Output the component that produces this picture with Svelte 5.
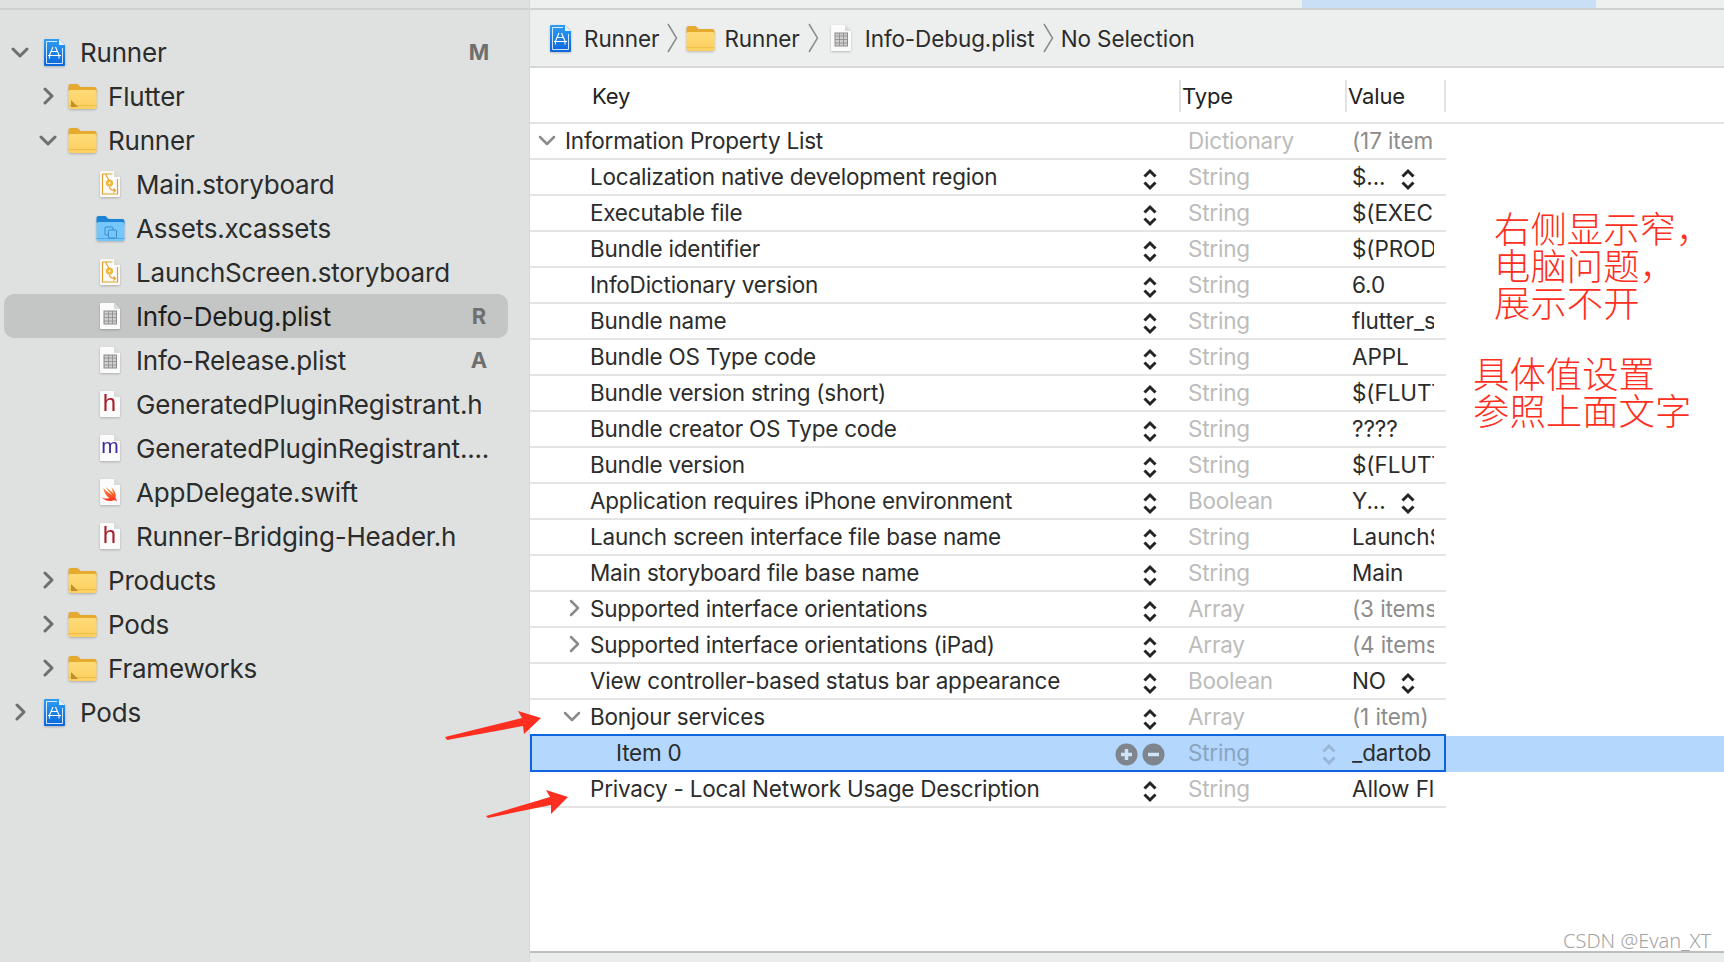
<script>
  const tree = [
    { level: 0, open: true, icon: 'project', name: 'Runner', badge: 'M' },
    { level: 1, open: false, icon: 'group', name: 'Flutter' },
    { level: 1, open: true, icon: 'folder', name: 'Runner' },
    { level: 2, icon: 'story', name: 'Main.storyboard' },
    { level: 2, icon: 'assets', name: 'Assets.xcassets' },
    { level: 2, icon: 'story', name: 'LaunchScreen.storyboard' },
    { level: 2, icon: 'plist', name: 'Info-Debug.plist', badge: 'R', selected: true },
    { level: 2, icon: 'plist', name: 'Info-Release.plist', badge: 'A' },
    { level: 2, icon: 'h', name: 'GeneratedPluginRegistrant.h' },
    { level: 2, icon: 'm', name: 'GeneratedPluginRegistrant....' },
    { level: 2, icon: 'swift', name: 'AppDelegate.swift' },
    { level: 2, icon: 'h', name: 'Runner-Bridging-Header.h' },
    { level: 1, open: false, icon: 'group', name: 'Products' },
    { level: 1, open: false, icon: 'folder', name: 'Pods' },
    { level: 1, open: false, icon: 'group', name: 'Frameworks' },
    { level: 0, open: false, icon: 'project', name: 'Pods' }
  ];

  const rows = [
    { level: 0, open: true, key: 'Information Property List', type: 'Dictionary', value: '(17 items', muted: true, noStep: true },
    { key: 'Localization native development region', type: 'String', value: '$...', valueStep: true },
    { key: 'Executable file', type: 'String', value: '$(EXEC' },
    { key: 'Bundle identifier', type: 'String', value: '$(PROD' },
    { key: 'InfoDictionary version', type: 'String', value: '6.0' },
    { key: 'Bundle name', type: 'String', value: 'flutter_s' },
    { key: 'Bundle OS Type code', type: 'String', value: 'APPL' },
    { key: 'Bundle version string (short)', type: 'String', value: '$(FLUTT' },
    { key: 'Bundle creator OS Type code', type: 'String', value: '????' },
    { key: 'Bundle version', type: 'String', value: '$(FLUTT' },
    { key: 'Application requires iPhone environment', type: 'Boolean', value: 'Y...', valueStep: true },
    { key: 'Launch screen interface file base name', type: 'String', value: 'LaunchS' },
    { key: 'Main storyboard file base name', type: 'String', value: 'Main' },
    { key: 'Supported interface orientations', open: false, type: 'Array', value: '(3 items', muted: true },
    { key: 'Supported interface orientations (iPad)', open: false, type: 'Array', value: '(4 items', muted: true },
    { key: 'View controller-based status bar appearance', type: 'Boolean', value: 'NO', valueStep: true },
    { key: 'Bonjour services', open: true, type: 'Array', value: '(1 item)', muted: true },
    { level: 2, key: 'Item 0', type: 'String', value: '_dartob', selected: true },
    { key: 'Privacy - Local Network Usage Description', type: 'String', value: 'Allow Fl' }
  ];
</script>

{#snippet chevron(open)}
  {#if open}
    <svg class="chev" width="18" height="11" viewBox="0 0 18 11"><path d="M2 2l7 7 7-7" /></svg>
  {:else}
    <svg class="chev closed" width="11" height="18" viewBox="0 0 11 18"><path d="M2 2l7 7-7 7" /></svg>
  {/if}
{/snippet}

{#snippet stepper(pale)}
  <svg class="stepper" class:pale width="16" height="23" viewBox="0 0 16 23"><path d="M2.5 8.5L8 3l5.5 5.5M2.5 14.5L8 20l5.5-5.5" /></svg>
{/snippet}

{#snippet project()}
  <svg class="glyph" width="23" height="29" viewBox="0 0 23 29">
    <linearGradient id="blue" x1="0" y1="0" x2="0" y2="1"><stop offset="0" stop-color="#2f9df0" /><stop offset="1" stop-color="#0a66dd" /></linearGradient>
    <path d="M1 2a1 1 0 0 1 1-1h14l6 6v20a1 1 0 0 1-1 1H2a1 1 0 0 1-1-1z" fill="url(#blue)" />
    <path d="M16 1l6 6h-6z" fill="#e4f0fb" />
    <path d="M14 3.5H3.5v22h16V10" fill="none" stroke="#fff" stroke-width=".8" />
    <path d="M10 9l-3.5 8M12.5 9l3.5 8M5 17.5h13M8 13.5h7M6.5 17.5v3M16 17.5v3" fill="none" stroke="#fff" stroke-width="1.1" />
  </svg>
{/snippet}

{#snippet folder(corner)}
  <svg class="glyph" width="29" height="27" viewBox="0 0 29 27">
    <linearGradient id="yellow" x1="0" y1="0" x2="0" y2="1"><stop offset="0" stop-color="#fedb78" /><stop offset="1" stop-color="#fccf5f" /></linearGradient>
    <path d="M.5 8V3a2 2 0 0 1 2-2h7l3 3h14a2 2 0 0 1 2 2v4z" fill="#e6ab2e" />
    <rect x=".5" y="7" width="28" height="19" rx="2" fill="url(#yellow)" />
    <rect x=".5" y="22" width="28" height="1" fill="#f0bd48" />
    {#if corner}<path d="M3 24v-7l7 7z" fill="#bd8f2d" />{/if}
  </svg>
{/snippet}

{#snippet assets()}
  <svg class="glyph" width="29" height="27" viewBox="0 0 29 27">
    <path d="M.5 8V3a2 2 0 0 1 2-2h7l3 3h14a2 2 0 0 1 2 2v4z" fill="#1b84d6" />
    <rect x=".5" y="7" width="28" height="19" rx="2" fill="#74c6fb" />
    <rect x=".5" y="23" width="28" height="1" fill="#4ea9ea" />
    <rect x="9" y="12" width="8" height="8" rx="1" fill="none" stroke="#3a8ccb" />
    <rect x="12.5" y="15" width="8" height="8" rx="1" fill="#74c6fb" stroke="#3a8ccb" />
  </svg>
{/snippet}

{#snippet page()}
  <path d="M1 2a1 1 0 0 1 1-1h13l6 6v19a1 1 0 0 1-1 1H2a1 1 0 0 1-1-1z" fill="#fbfbfb" />
  <path d="M15 1l6 6h-6z" fill="#d9dada" />
{/snippet}

{#snippet fileIcon(kind)}
  <svg class="glyph" width="22" height="28" viewBox="0 0 22 28">
    {@render page()}
    {#if kind === 'story'}
      <path d="M13.5 4H3.5v20h15V9" fill="none" stroke="#e0a02a" stroke-width="1.2" />
      <circle cx="10.5" cy="13" r="3.6" fill="#f2b63c" />
      <circle cx="10.5" cy="13" r="1.2" fill="#fbe7b5" />
      <path d="M7 4c0 3 2 4 3 6M10.5 16.500c0 3 2 4 6 4M14.500 18.500l2 2-2 2" fill="none" stroke="#e0a02a" stroke-width="1.1" />
    {:else if kind === 'plist'}
      <rect x="5" y="9" width="12.500" height="13" fill="#cfcfcf" stroke="#8c8c8c" />
      <path d="M5 12h12.500M5 15.500h12.500M5 19h12.500M9.500 9v13M13.500 9v13" stroke="#8c8c8c" stroke-width=".8" />
    {:else if kind === 'h'}
      <text class="ftext" x="10.500" y="21" fill="#a71d2a">h</text>
    {:else if kind === 'm'}
      <text class="ftext small" x="11" y="19" fill="#3c2a9c">m</text>
    {:else if kind === 'swift'}
      <linearGradient id="swift" x1="0" y1="0" x2="0" y2="1"><stop offset="0" stop-color="#fa9a3a" /><stop offset="1" stop-color="#fb2a1e" /></linearGradient>
      <path d="M4 10c3 3 6 5 9 7-2.500-2.500-4.500-5-6-8 2.500 2.500 5 4.500 8 6.500-1-1.700-2-3.500-2.500-6 3.500 3 5 7 4 10.500 1 1.200 1.400 2.300 1.300 3.500-1-1.300-2.600-1.500-4-1-3.500 1.300-8 .5-11.500-3.500 3 1.700 5.500 2 8 1-3-2-5-5.500-6.300-10.500z" fill="url(#swift)" />
    {/if}
  </svg>
{/snippet}

{#snippet crumbSep()}
  <svg class="sep" width="11" height="30" viewBox="0 0 11 30"><path d="M1 1l8.500 14L1 29" /></svg>
{/snippet}

<div class="app">
  <aside class="sidebar">
    <div class="strip"></div>
    <ul class="tree">
      {#each tree as item}
        <li class="node" class:selected={item.selected} style="padding-left: {4 + item.level * 28}px">
          <span class="chev-slot">
            {#if item.open !== undefined}{@render chevron(item.open)}{/if}
          </span>
          <span class="icon-slot">
            {#if item.icon === 'project'}{@render project()}
            {:else if item.icon === 'group'}{@render folder(true)}
            {:else if item.icon === 'folder'}{@render folder(false)}
            {:else if item.icon === 'assets'}{@render assets()}
            {:else}{@render fileIcon(item.icon)}{/if}
          </span>
          <span class="name">{item.name}</span>
          {#if item.badge}<span class="badge">{item.badge}</span>{/if}
        </li>
      {/each}
    </ul>
  </aside>

  <main class="editor">
    <div class="strip light"><div class="tab-hint"></div></div>
    <nav class="crumbs">
      {@render project()}
      <span class="after-project">Runner</span>
      {@render crumbSep()}
      {@render folder(false)}
      <span>Runner</span>
      {@render crumbSep()}
      <span class="file-crumb">{@render fileIcon('plist')}</span>
      <span class="after-file">Info-Debug.plist</span>
      {@render crumbSep()}
      <span class="tight">No Selection</span>
    </nav>

    <div class="head">
      <div class="cols">
        <div class="hcell first">Key</div>
        <div class="hcell">Type</div>
        <div class="hcell last">Value</div>
      </div>
    </div>

    <div class="table">
      {#each rows as row}
        <div class="row" class:selected={row.selected}>
          <div class="cols">
            <div class="key" class:top={row.level === 0} class:deep={row.level === 2}>
              <span class="disc">
                {#if row.open !== undefined}{@render chevron(row.open)}{/if}
              </span>
              <span class="key-text">{row.key}</span>
              {#if row.selected}
                <svg class="round" width="23" height="23" viewBox="0 0 23 23"><circle cx="11.500" cy="11.500" r="11" /><path d="M11.500 6v11M6 11.500h11" /></svg>
                <svg class="round" width="23" height="23" viewBox="0 0 23 23"><circle cx="11.500" cy="11.500" r="11" /><path d="M6 11.500h11" /></svg>
              {:else if !row.noStep}
                {@render stepper(false)}
              {/if}
            </div>
            <div class="type">
              <span>{row.type}</span>
              {#if row.selected}{@render stepper(true)}{/if}
            </div>
            <div class="val" class:muted={row.muted}>
              <span class="val-text">{row.value}</span>
              {#if row.valueStep}{@render stepper(false)}{/if}
            </div>
          </div>
        </div>
      {/each}
    </div>
    <div class="footer"></div>
  </main>

  <svg class="arrows" width="1724" height="962" viewBox="0 0 1724 962">
    <path d="M445 737L522 718 518 711 541 718 524 734 523 726 447 740z" />
    <path d="M486 816L550 797 546 790 568 797 551 814 551 805 488 818z" />
  </svg>

  <div class="note one">右侧显示窄，<br />电脑问题，<br />展示不开</div>
  <div class="note two">具体值设置<br />参照上面文字</div>
  <div class="watermark">CSDN @Evan_XT</div>
</div>

<style>
  :global(body) {
    margin: 0;
  }

  .app {
    position: relative;
    display: flex;
    width: 1724px;
    height: 962px;
    overflow: hidden;
    font-family: Inter, "Noto Sans", sans-serif;
    color: #2b2c2c;
  }

  .sidebar {
    width: 530px;
    flex: none;
    box-sizing: border-box;
    background: #dfe1e0;
    border-right: 1px solid #d6d8d7;
  }

  .strip {
    height: 8px;
    border-bottom: 2px solid #cfd1d0;
  }

  .strip.light {
    background: #eef0ef;
    padding-left: 772px;
  }

  .tab-hint {
    width: 294px;
    height: 8px;
    background: #c8dff5;
  }

  .tree {
    list-style: none;
    margin: 20px 21px 0 4px;
    padding: 0;
  }

  .node {
    display: flex;
    align-items: center;
    height: 44px;
    padding-right: 14px;
    border-radius: 10px;
    font-size: 26px;
    letter-spacing: -0.2px;
    white-space: nowrap;
  }

  .node.selected {
    background: #c4c6c5;
    color: #1d1d1d;
  }

  .chev-slot {
    width: 24px;
    flex: none;
    display: flex;
    justify-content: center;
    align-items: center;
  }

  .chev {
    flex: none;
    fill: none;
    stroke: #6d6f6f;
    stroke-width: 3;
    stroke-linecap: round;
    stroke-linejoin: round;
  }

  .icon-slot {
    width: 44px;
    flex: none;
    display: flex;
    justify-content: center;
    align-items: center;
  }

  .glyph {
    flex: none;
    filter: drop-shadow(0 1px 1px rgba(0, 0, 0, 0.22));
  }

  .name {
    margin-left: 4px;
  }

  .badge {
    margin-left: auto;
    width: 30px;
    text-align: center;
    font-size: 22px;
    font-weight: 700;
    color: #6e7070;
    letter-spacing: 0;
  }

  .ftext {
    font-family: "Liberation Sans", sans-serif;
    font-size: 24px;
    text-anchor: middle;
    letter-spacing: 0;
  }

  .ftext.small {
    font-size: 21px;
  }

  .editor {
    flex: 1;
    display: flex;
    flex-direction: column;
    min-width: 0;
    background: #fff;
  }

  .crumbs {
    display: flex;
    align-items: center;
    gap: 9px;
    height: 56px;
    padding-left: 19px;
    background: #edefee;
    border-bottom: 2px solid #d6d8d7;
    font-size: 22.500px;
    letter-spacing: -0.1px;
  }

  .after-project {
    margin-left: 3px;
  }

  .after-file {
    margin-left: 4px;
  }

  .file-crumb {
    display: flex;
    margin-left: 3px;
  }

  .tight {
    margin-left: -1px;
  }

  .sep {
    margin: 0 -1px;
    fill: none;
    stroke: #8b8c8c;
    stroke-width: 1.500;
  }

  .head {
    height: 54px;
    border-bottom: 2px solid #e3e3e3;
  }

  .cols {
    display: grid;
    grid-template-columns: 649px 166px 101px;
    width: 916px;
    height: 100%;
    box-sizing: border-box;
  }

  .hcell {
    display: flex;
    align-items: center;
    align-self: center;
    box-sizing: border-box;
    height: 32px;
    margin-top: 2px;
    padding: 0 0 1px 1px;
    border-left: 2px solid #e3e3e3;
    font-size: 22px;
    letter-spacing: -0.1px;
    color: #222;
  }

  .hcell.first {
    padding-left: 62px;
    border-left: none;
  }

  .hcell.last {
    border-right: 2px solid #e3e3e3;
  }

  .table {
    flex: 1;
  }

  .row {
    height: 36px;
    font-size: 22.500px;
    letter-spacing: -0.22px;
    white-space: nowrap;
  }

  .row .cols {
    position: relative;
    padding-bottom: 2px;
    border-bottom: 2px solid #e4e4e4;
  }

  .row.selected {
    background: #b3d7fd;
  }

  .row.selected .cols {
    padding-bottom: 4px;
    border-bottom: none;
  }

  .row.selected .cols::after {
    content: "";
    position: absolute;
    inset: -2px 0 0 0;
    border: 2px solid #0f65de;
    pointer-events: none;
  }

  .key {
    display: flex;
    align-items: center;
    padding: 0 21px 0 36px;
    min-width: 0;
  }

  .key.top {
    padding-left: 11px;
  }

  .key.deep {
    padding-left: 62px;
    padding-right: 14px;
  }

  .disc {
    width: 24px;
    flex: none;
    box-sizing: border-box;
    padding-right: 12px;
    display: flex;
    justify-content: center;
    align-items: center;
  }

  .disc .chev {
    stroke: #8a8a8a;
    stroke-width: 2.500;
  }

  .disc .closed {
    margin-left: 4px;
  }

  .key-text {
    flex: 1;
  }

  .stepper {
    flex: none;
    margin-top: 7px;
    fill: none;
    stroke: #242424;
    stroke-width: 3;
  }

  .stepper.pale {
    margin-top: 4px;
    stroke: #9ab6d6;
  }

  .round {
    flex: none;
    margin: 4px 0 0 4px;
  }

  .round circle {
    fill: #7f858c;
  }

  .round path {
    stroke: #cfe3f9;
    stroke-width: 3.500;
  }

  .type {
    display: flex;
    align-items: center;
    justify-content: space-between;
    padding: 0 8px 0 9px;
    color: #bcbcbc;
  }

  .selected .type {
    color: #8ba4c0;
  }

  .val {
    display: flex;
    align-items: center;
    padding: 0 12px 0 7px;
    min-width: 0;
    letter-spacing: -0.1px;
  }

  .val.muted {
    color: #8c8c8c;
  }

  .val-text {
    flex: 1;
    min-width: 0;
    overflow: hidden;
  }

  .val .stepper {
    margin-right: 18px;
  }

  .footer {
    height: 9px;
    background: #ebedec;
    border-top: 2px solid #bdbfbe;
  }

  .arrows {
    position: absolute;
    left: 0;
    top: 0;
    fill: #fe2f20;
    pointer-events: none;
  }

  .note {
    position: absolute;
    font-family: "Noto Sans CJK SC", sans-serif;
    font-size: 36.400px;
    font-weight: 300;
    line-height: 37px;
    color: #fe2f20;
    white-space: nowrap;
  }

  .note.one {
    left: 1494px;
    top: 209px;
  }

  .note.two {
    left: 1473px;
    top: 354px;
  }

  .watermark {
    position: absolute;
    left: 1563px;
    top: 927px;
    font-family: "Noto Sans", sans-serif;
    font-size: 20px;
    font-weight: 300;
    color: #a3a5a4;
  }
</style>
